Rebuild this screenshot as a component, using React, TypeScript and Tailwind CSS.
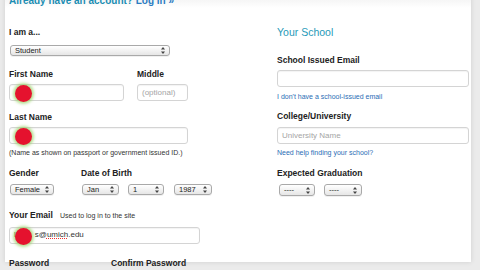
import React from "react";

const font = { fontFamily: '"Liberation Sans", Arial, sans-serif' };

function Arrows() {
  return (
    <svg width="4" height="7" viewBox="0 0 4 7" className="shrink-0">
      <path d="M2 0 L4 2.6 L0 2.6 Z" fill="#444" />
      <path d="M2 7 L4 4.4 L0 4.4 Z" fill="#444" />
    </svg>
  );
}

function Select({ label, className }: { label: string; className: string }) {
  return (
    <div
      className={`flex items-center justify-between rounded-[3px] border border-[#a9a9a9] bg-gradient-to-b from-white to-[#e6e6e6] pl-[4px] pr-[4px] text-[7.5px] leading-none text-[#222] shadow-[0_1px_0_rgba(0,0,0,0.06)] ${className}`}
    >
      <span>{label}</span>
      <Arrows />
    </div>
  );
}

function Label({ children, className = "" }: { children: React.ReactNode; className?: string }) {
  return (
    <div className={`h-[11px] text-[8.5px] font-bold leading-[11px] text-[#222] ${className}`}>
      {children}
    </div>
  );
}

function Dot() {
  return (
    <div className="absolute left-[5px] top-[0px] h-[17px] w-[17px] rounded-full bg-[#e5122e] shadow-[0_0_3px_2px_rgba(150,210,100,0.7)]" />
  );
}

function Input({
  className,
  placeholder,
  value,
  dot,
}: {
  className: string;
  placeholder?: string;
  value?: React.ReactNode;
  dot?: boolean;
}) {
  return (
    <div
      className={`relative flex h-[17px] items-center rounded-[3px] border border-[#d4d4d4] bg-white px-[4px] text-[8px] shadow-[inset_0_1px_1px_rgba(0,0,0,0.05)] ${className}`}
    >
      {placeholder && <span className="text-[#a5a5a5]">{placeholder}</span>}
      {value && <span className="text-[#333]">{value}</span>}
      {dot && <Dot />}
    </div>
  );
}

export default function App() {
  return (
    <div className="h-[270px] w-[480px] overflow-hidden bg-[#ebebeb]" style={font}>
      <div className="ml-[5px] h-[266px] w-[466px] bg-[linear-gradient(to_bottom,#f1f1f1,#ffffff_12px)] pl-[4px] shadow-[0_0_5px_rgba(0,0,0,0.12)]">
        <div className="-mt-[4px] h-[10px] text-[10px] font-bold leading-[10px] text-[#1b8db3]">
          Already have an account? <span className="text-[#2b7cc2]">Log in »</span>
        </div>

        <div className="grid grid-cols-[268px_192px]">
          {/* left column */}
          <div className="flex flex-col">
            <Label className="mt-[21px]">I am a...</Label>
            <Select label="Student" className="ml-[1px] mt-[7px] h-[11px] w-[160px]" />

            <div className="mt-[13px] flex">
              <Label className="w-[128px]">First Name</Label>
              <Label>Middle</Label>
            </div>
            <div className="mt-[4px] flex">
              <Input className="w-[115px]" dot />
              <Input className="ml-[13px] w-[51px]" placeholder="(optional)" />
            </div>

            <Label className="mt-[11px]">Last Name</Label>
            <Input className="mt-[4px] w-[179px]" dot />
            <div className="mt-[4px] h-[9px] text-[7px] leading-[9px] text-[#333]">
              (Name as shown on passport or government issued ID.)
            </div>

            <div className="mt-[11px] flex">
              <Label className="w-[72px]">Gender</Label>
              <Label>Date of Birth</Label>
            </div>
            <div className="mt-[5px] flex">
              <Select label="Female" className="ml-[1px] h-[11px] w-[44px]" />
              <Select label="Jan" className="ml-[28px] h-[11px] w-[37px]" />
              <Select label="1" className="ml-[9px] h-[11px] w-[36px]" />
              <Select label="1987" className="ml-[10px] h-[11px] w-[38px]" />
            </div>

            <div className="mt-[15px] flex items-baseline">
              <Label className="w-[51px]">Your Email</Label>
              <span className="text-[7px] text-[#333]">Used to log in to the site</span>
            </div>
            <Input
              className="mt-[5px] w-[191px]"
              dot
              value={
                <>
                  l<span className="ml-[19px]">s@</span>
                  <span className="underline decoration-[#e33] decoration-dotted">umich</span>.edu
                </>
              }
            />

            <div className="mt-[14px] flex">
              <Label className="w-[102px]">Password</Label>
              <Label>Confirm Password</Label>
            </div>
          </div>

          {/* right column */}
          <div className="flex flex-col">
            <div className="mt-[20px] h-[13px] text-[10.5px] leading-[13px] text-[#1f9ab8]">
              Your School
            </div>
            <Label className="mt-[16px]">School Issued Email</Label>
            <Input className="mt-[4px] w-[192px]" />
            <div className="mt-[5px] h-[9px] text-[7px] leading-[9px] text-[#2a6db5]">
              I don't have a school-issued email
            </div>
            <Label className="mt-[10px]">College/University</Label>
            <Input className="mt-[5px] w-[192px]" placeholder="University Name" />
            <div className="mt-[4px] h-[9px] text-[7px] leading-[9px] text-[#2a6db5]">
              Need help finding your school?
            </div>
            <Label className="mt-[11px]">Expected Graduation</Label>
            <div className="mt-[5px] flex">
              <Select label="----" className="ml-[2px] h-[12px] w-[36px]" />
              <Select label="----" className="ml-[9px] h-[12px] w-[38px]" />
            </div>
          </div>
        </div>
      </div>
    </div>
  );
}
